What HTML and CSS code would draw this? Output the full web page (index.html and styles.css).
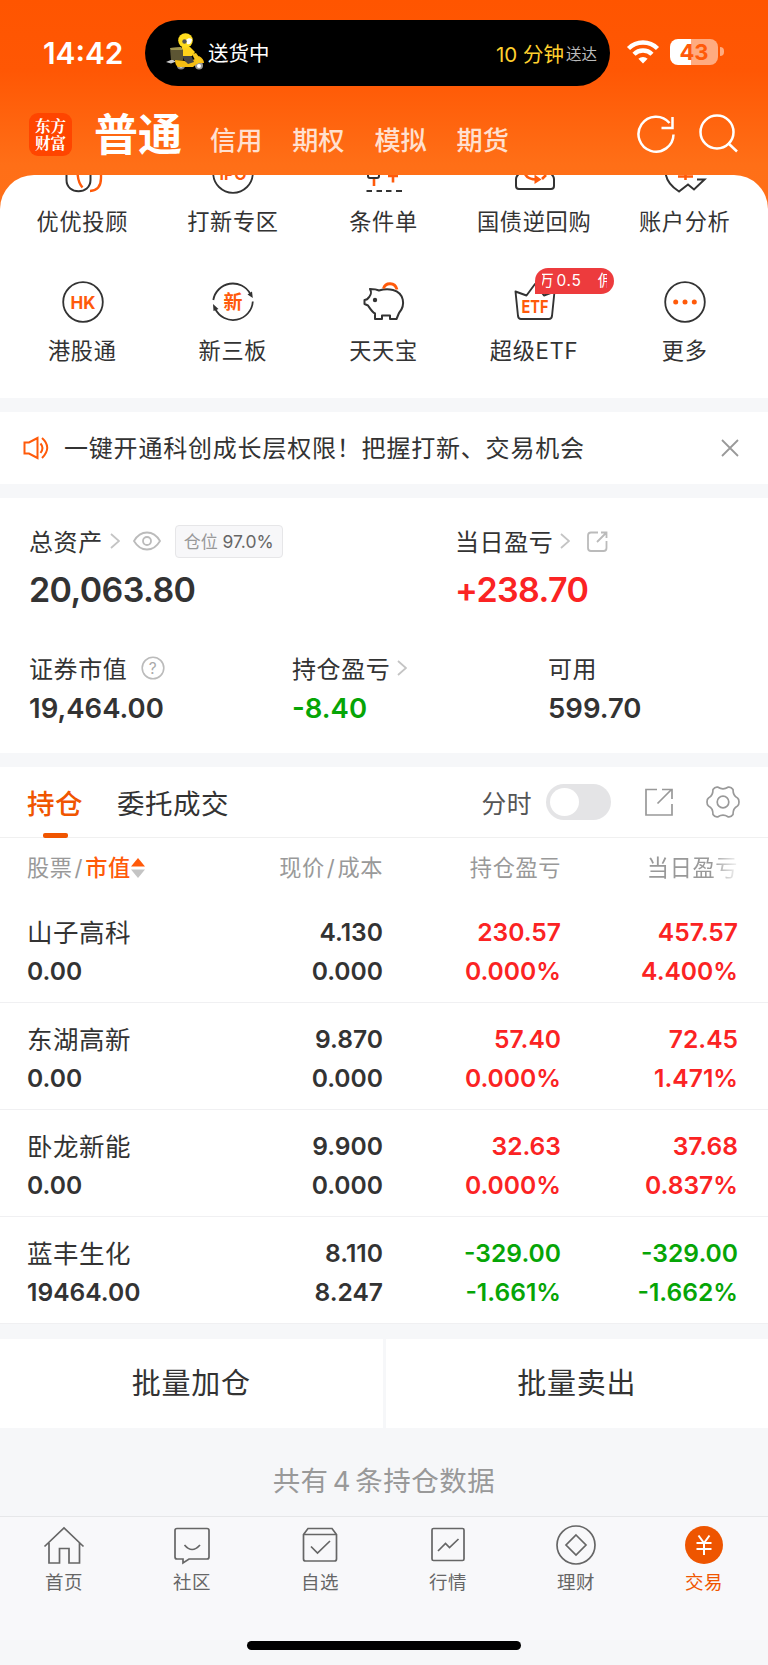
FILE: index.html
```html
<!DOCTYPE html>
<html lang="zh-CN">
<head>
  <meta charset="UTF-8">
  <meta name="viewport" content="width=device-width, initial-scale=1.0">
  <title>东方财富 - 交易</title>
  <link rel="stylesheet" href="styles.css">
</head>
<body>

  <header class="top">
    <div class="status">
      <div class="time">14:42</div>
      <div class="island">
        <svg class="scooter" width="40" height="38" viewBox="0 0 40 38">
          <path d="M1 29l6-2.500 4 2-5 2z" fill="#ccc"/>
          <circle cx="16" cy="32.500" r="4" fill="#888"/><circle cx="16" cy="33" r="1.800" fill="#eee"/>
          <circle cx="34" cy="32.500" r="4" fill="#999"/><circle cx="34" cy="33" r="2" fill="#fff"/>
          <path d="M10 27q8 0 13 2l7-3 4-3q5 3 5 7l-6 0-5 4H13q-3-2-3-7z" fill="#f5be14"/>
          <path d="M17 22h9l3 7-6 2-4-4z" fill="#444"/>
          <path d="M17 14h8l5 5-3 4H17z" fill="#ffd21a"/>
          <path d="M27 21l4-1 6 8-5 3z" fill="#f7c61c"/>
          <path d="M5 15l11-1 2 3v10H6z" fill="#5c5533"/><path d="M5 15l11-1 2 3H6z" fill="#a1964f"/>
          <circle cx="20.500" cy="7.500" r="7.300" fill="#ffdc1f"/>
          <path d="M21 7c2-2 4-2 6-1 0 4-2 6-5 5z" fill="#fff"/><circle cx="19.500" cy="8.500" r="2.200" fill="#555"/>
        </svg>
        <span class="delivering">送货中</span>
        <span class="eta">10 分钟</span><span class="eta-sub">送达</span>
      </div>
      <svg class="wifi" width="34" height="26" viewBox="0 0 34 26">
        <g fill="none" stroke="#fff" stroke-width="4.400">
          <path d="M2.500 9.500a20.500 20.500 0 0 1 29 0"/>
          <path d="M8 15.200a12.700 12.700 0 0 1 18 0"/>
        </g>
        <path d="M17 24.500l-4.600-4.700a6.600 6.600 0 0 1 9.200 0z" fill="#fff"/>
      </svg>
      <div class="battery">43</div>
      <div class="battery-tip"></div>
    </div>
    <div class="nav">
      <div class="logo">东方<br>财富</div>
      <div class="nav-main">普通</div>
      <div class="nav-item">信用</div>
      <div class="nav-item">期权</div>
      <div class="nav-item">模拟</div>
      <div class="nav-item">期货</div>
      <div class="nav-icons">
        <svg width="40" height="40" viewBox="0 0 40 40" fill="none" stroke="#fff" stroke-width="2.500">
          <path d="M37.500 20.500A17.500 17.500 0 1 1 33.500 9"/><path d="M36.500 3v11h-11"/>
        </svg>
        <svg width="40" height="40" viewBox="0 0 40 40" fill="none" stroke="#fff" stroke-width="2.500">
          <circle cx="18" cy="18" r="16.500"/><path d="M29 29l9 8.500"/>
        </svg>
      </div>
    </div>
  </header>

  <section class="sheet">
    <div class="grid">
      <div class="cell">
        <svg width="44" height="44" viewBox="0 0 44 44">
          <path d="M5.500 20v9c0 15 24 15 24 0v-9" fill="none" stroke="#333" stroke-width="2"/>
          <path d="M16.500 20c0 8 1 12 5 16.500M40 20v7c0 8-3 12.500-11 13" fill="none" stroke="#ff5a0a" stroke-width="2.400"/>
        </svg>
        <span>优优投顾</span>
      </div>
      <div class="cell">
        <svg width="44" height="44" viewBox="0 0 44 44">
          <circle cx="22" cy="22" r="19.800" fill="none" stroke="#333" stroke-width="1.800"/>
          <text class="ico-text" x="22" y="28.500" font-size="16">IPO</text>
        </svg>
        <span>打新专区</span>
      </div>
      <div class="cell">
        <svg width="44" height="44" viewBox="0 0 44 44" fill="none" stroke="#333" stroke-width="2">
          <path d="M6 20v5q0 2 2 2h7q2 0 2-2v-5"/><path d="M4.500 40h5.500M14.500 40h5.500M24 40h5.500M34 40h6"/>
          <path d="M12 28v7M31 20v11.500M26 25h10" stroke="#ff5a0a" stroke-width="2.600"/>
        </svg>
        <span>条件单</span>
      </div>
      <div class="cell">
        <svg width="44" height="44" viewBox="0 0 44 44" fill="none" stroke="#333" stroke-width="2">
          <path d="M7 22q-4 3-4 6v7q0 3 3 3h32q3 0 3-3v-7q0-3-4-6"/>
          <path d="M12 23c2 4 7 5.500 12 5.500M29 28l4-4" stroke="#ff5a0a" stroke-width="2.600"/>
          <path d="M21.500 23.500l7 5-7 4.500z" fill="#ff5a0a" stroke="none"/>
        </svg>
        <span>国债逆回购</span>
      </div>
      <div class="cell">
        <svg width="44" height="44" viewBox="0 0 44 44" fill="none" stroke="#333" stroke-width="2">
          <path d="M2.500 20c0 11 8 17 13.500 20.500l9-7 6 5 10.500-10H34"/>
          <path d="M22.500 18v11M15 25.500h15" stroke="#ff5a0a" stroke-width="2.600"/>
        </svg>
        <span>账户分析</span>
      </div>
      <div class="cell">
        <svg width="44" height="44" viewBox="0 0 44 44">
          <circle cx="22" cy="22" r="19.800" fill="none" stroke="#333" stroke-width="1.800"/>
          <text class="ico-text" x="22" y="28.500" font-size="18" textLength="25" lengthAdjust="spacingAndGlyphs">HK</text>
        </svg>
        <span>港股通</span>
      </div>
      <div class="cell">
        <svg width="44" height="44" viewBox="0 0 44 44">
          <path d="M2.300 20a19.800 19.800 0 0 1 37-6M41.800 21.500a19.800 19.800 0 0 1-37.500 7.500" fill="none" stroke="#333" stroke-width="1.800"/>
          <path d="M36.500 14.500l4.500-3 .8 6.500zM7.500 29l-5 2-.5-7z" fill="#333"/>
          <text class="ico-text" x="22" y="28.700" font-size="19">新</text>
        </svg>
        <span>新三板</span>
      </div>
      <div class="cell">
        <svg width="44" height="44" viewBox="0 0 44 44" fill="none" stroke="#333" stroke-width="2" stroke-linejoin="round">
          <path d="M8 9c4 0 6 0 9 1.500 4-1.200 10-1.500 14-.5 11 3 13 15 6 23l-2.500 6h-6.500v-3.500H20v3.500h-7v-5.500c-3-1.500-5-5-7-8L2.500 24v-4c3 0 4-2 5-3.500 1.500-2 2.500-3.500.5-7.500z"/>
          <circle cx="13" cy="20" r="2.200" fill="#333" stroke="none"/>
          <path d="M21.500 8.500c2-6.500 11.500-6.500 13.500 1" stroke="#ff5a0a" stroke-width="2.800"/>
        </svg>
        <span>天天宝</span>
      </div>
      <div class="cell">
        <svg width="44" height="44" viewBox="0 0 44 44">
          <path d="M2.500 11.500l11 4L22 4l9 11.500 10.500-4-2.500 24.500q-.5 3-3 3H8q-2.500 0-3-3z" fill="none" stroke="#333" stroke-width="1.900" stroke-linejoin="round"/>
          <text class="ico-text" x="22" y="32.500" font-size="18" textLength="27" lengthAdjust="spacingAndGlyphs">ETF</text>
        </svg>
        <span>超级ETF</span>
        <div class="badge"><p><b>万</b>0.5<i>佣</i></p></div>
      </div>
      <div class="cell">
        <svg width="44" height="44" viewBox="0 0 44 44">
          <circle cx="22" cy="22" r="19.800" fill="none" stroke="#333" stroke-width="1.800"/>
          <g fill="#ff5a0a"><circle cx="12.700" cy="22" r="2.500"/><circle cx="22" cy="22" r="2.500"/><circle cx="31.300" cy="22" r="2.500"/></g>
        </svg>
        <span>更多</span>
      </div>
    </div>
  </section>

  <section class="notice">
    <svg width="26" height="24" viewBox="0 0 26 24" fill="none" stroke="#ff5a0a" stroke-width="2">
      <path d="M1.500 6.500h4.500L14.500 2v20L6 17.500H1.500z"/><path d="M17.500 7.500q4 4.500 0 9.500M19 2q10.500 9.500 0 20"/>
    </svg>
    <p>一键开通科创成长层权限！把握打新、交易机会</p>
    <svg width="18" height="18" viewBox="0 0 18 18" stroke="#999" stroke-width="1.800"><path d="M1 1l16 16M17 1L1 17"/></svg>
  </section>

  <section class="assets">
    <div class="row row-big">
      <div>
        <div class="label">
          总资产
          <svg class="arrow" width="10" height="16" viewBox="0 0 10 16"><path d="M1 1l8 7-8 7"/></svg>
          <svg class="eye" width="28" height="20" viewBox="0 0 28 20" fill="none" stroke="#bbb" stroke-width="1.800"><path d="M1 10q5-8.500 13-8.500T27 10q-5 8.500-13 8.500T1 10z"/><circle cx="14" cy="10" r="4"/></svg>
          <span class="ratio">仓位 <em>97.0%</em></span>
        </div>
        <div class="big">20,063.80</div>
      </div>
      <div>
        <div class="label">
          当日盈亏
          <svg class="arrow" width="10" height="16" viewBox="0 0 10 16"><path d="M1 1l8 7-8 7"/></svg>
          <svg class="share" width="21" height="21" viewBox="0 0 21 21" fill="none" stroke="#bbb" stroke-width="1.800"><path d="M11 1.500H4q-3 0-3 3V17q0 3 3 3h12.500q3 0 3-3v-7M10 11l9-9M14 1.500h5.500V7"/></svg>
        </div>
        <div class="big up">+238.70</div>
      </div>
    </div>
    <div class="row row-small">
      <div>
        <div class="label">
          证券市值
          <svg class="help" width="24" height="24" viewBox="0 0 24 24"><circle cx="12" cy="12" r="10.800" fill="none" stroke="#bbb" stroke-width="1.600"/><text x="12" y="17.500" font-size="15.500" text-anchor="middle">?</text></svg>
        </div>
        <div class="mid">19,464.00</div>
      </div>
      <div>
        <div class="label">
          持仓盈亏
          <svg class="arrow" width="10" height="16" viewBox="0 0 10 16"><path d="M1 1l8 7-8 7"/></svg>
        </div>
        <div class="mid down">-8.40</div>
      </div>
      <div>
        <div class="label">可用</div>
        <div class="mid">599.70</div>
      </div>
    </div>
  </section>

  <section class="tabs">
    <div class="tab active">持仓</div>
    <div class="tab">委托成交</div>
    <div class="minute">分时</div>
    <div class="switch"></div>
    <svg class="tab-share" width="28" height="28" viewBox="0 0 28 28" fill="none" stroke="#999" stroke-width="1.700"><path d="M12 1.500H1V27h26V16M12.500 15.500l14-14M17 1.500h10V11"/></svg>
    <svg class="gear" width="34" height="34" viewBox="0 0 34 34" fill="none" stroke="#999" stroke-width="1.700" stroke-linejoin="round">
      <path d="M12 2.200q5 3.300 10 0 3-.7 5 2.300 0 6.500 4.500 8.500 1.500 1 1.500 4t-1.500 4q-4.500 2-4.500 8.500-2 3-5 2.300-5-3.300-10 0-3 .7-5-2.300 0-6.500-4.500-8.500Q1 20 1 17t1.500-4Q7 11 7 4.500q2-3 5-2.300z"/>
      <circle cx="17" cy="17" r="5.800"/>
    </svg>
  </section>

  <section class="table">
    <div class="tr th">
      <div>股票<s>/</s><span class="sort">市值</span><svg width="14" height="20" viewBox="0 0 14 20"><path d="M7 0l7 8.500H0z" fill="#ff5a0a"/><path d="M0 11.500h14L7 20z" fill="#c4c4c4"/></svg></div>
      <div>现价<s>/</s>成本</div>
      <div>持仓盈亏</div>
      <div class="fade">当日盈亏</div>
    </div>
    <div class="tr">
      <div><b>山子高科</b>0.00</div>
      <div>4.130<br>0.000</div>
      <div class="up">230.57<br>0.000%</div>
      <div class="up">457.57<br>4.400%</div>
    </div>
    <div class="tr">
      <div><b>东湖高新</b>0.00</div>
      <div>9.870<br>0.000</div>
      <div class="up">57.40<br>0.000%</div>
      <div class="up">72.45<br>1.471%</div>
    </div>
    <div class="tr">
      <div><b>卧龙新能</b>0.00</div>
      <div>9.900<br>0.000</div>
      <div class="up">32.63<br>0.000%</div>
      <div class="up">37.68<br>0.837%</div>
    </div>
    <div class="tr">
      <div><b>蓝丰生化</b>19464.00</div>
      <div>8.110<br>8.247</div>
      <div class="down">-329.00<br>-1.661%</div>
      <div class="down">-329.00<br>-1.662%</div>
    </div>
  </section>

  <section class="batch">
    <div>批量加仓</div>
    <div>批量卖出</div>
  </section>

  <p class="total">共有 4 条持仓数据</p>

  <nav class="bottom">
    <div class="item">
      <svg width="42" height="42" viewBox="0 0 42 42"><path d="M1.500 22.500L21 4l19.500 18.500M6 19v20h10.500V24.500h9.500V39h10.500V19"/></svg>
      首页
    </div>
    <div class="item">
      <svg width="42" height="42" viewBox="0 0 42 42"><path d="M6 4.500h30q2 0 2 2V33q0 2-2 2H18l-6 4v-4H6q-2 0-2-2V6.500q0-2 2-2zM13.500 21q7.500 9 15.500 0"/></svg>
      社区
    </div>
    <div class="item">
      <svg width="42" height="42" viewBox="0 0 42 42"><path d="M9 4.500h24l4.500 6V35q0 2-2 2h-29q-2 0-2-2V10.500zM4.500 10.500h33M12 22.500l6.500 6.500L31 17"/></svg>
      自选
    </div>
    <div class="item">
      <svg width="42" height="42" viewBox="0 0 42 42"><rect x="5" y="4.500" width="32" height="32" rx="1.500"/><path d="M11 27l7.500-7.500 4 4L31.500 15"/></svg>
      行情
    </div>
    <div class="item">
      <svg width="42" height="42" viewBox="0 0 42 42"><circle cx="21" cy="21" r="19"/><path d="M21 11l10 10-10 10-10-10z"/></svg>
      理财
    </div>
    <div class="item on">
      <svg width="42" height="42" viewBox="0 0 42 42"><circle class="disc" cx="21" cy="21" r="19"/><path class="yen" d="M15.500 11.500l5.500 7.500 5.500-7.500M21 19v12M13.500 19h15M13.500 25h15"/></svg>
      交易
    </div>
  </nav>
  <div class="home-bar"></div>

</body>
</html>
```
FILE: styles.css
```css
* {
  box-sizing: border-box;
}
body {
  margin: 0;
  width: 768px;
  height: 1665px;
  overflow: hidden;
  display: flex;
  flex-direction: column;
  background: #f6f7f9;
  color: #333;
  font-family: Inter, "Noto Sans CJK SC", sans-serif;
}
p {
  margin: 0;
}
svg {
  flex: none;
  display: block;
}
.up {
  color: #fb2323;
}
.down {
  color: #06a506;
}

/* header */
.top {
  height: 220px;
  flex: none;
  color: #fff;
  background: linear-gradient(#ff5500 0, #ff5704 70px, #ff6f17 165px, #ff7019 220px);
}
.status {
  display: flex;
  align-items: center;
  height: 86px;
  padding: 20px 0 0 43px;
}
.time {
  width: 102px;
  font-size: 29.8px;
  font-weight: 600;
}
.island {
  display: flex;
  align-items: center;
  width: 465px;
  height: 66px;
  padding: 0 13px 0 20px;
  border-radius: 33px;
  background: #000;
}
.scooter {
  margin-top: -3px;
}
.delivering {
  margin: -2px 0 0 3px;
  font-size: 20.5px;
}
.eta {
  margin: -1px 0 0 auto;
  font-size: 20.5px;
  color: #ffd02e;
}
.eta-sub {
  margin-left: 2px;
  font-size: 15.5px;
  color: #bbb;
}
.wifi {
  margin: -2px 0 0 16px;
}
.battery {
  width: 48px;
  height: 26px;
  margin: -3px 0 0 10px;
  border-radius: 8px;
  background: linear-gradient(90deg, #fff 21px, #ffab80 21px);
  color: #ff5a0a;
  font-size: 22px;
  font-weight: 700;
  line-height: 26px;
  text-align: center;
}
.battery-tip {
  width: 4px;
  height: 9px;
  margin: -3px 0 0 2px;
  border-radius: 0 5px 5px 0;
  background: #ffab80;
}
.nav {
  display: flex;
  align-items: center;
  height: 96px;
  padding: 0 29px;
}
.logo {
  width: 43px;
  height: 43px;
  padding-top: 4px;
  border-radius: 9px;
  background: #ff4500;
  font-family: "Noto Serif CJK SC", "Noto Sans CJK SC", sans-serif;
  font-size: 15.5px;
  font-weight: 700;
  line-height: 17.5px;
  text-align: center;
}
.nav-main {
  margin: -5px 14px 0 22px;
  font-size: 44px;
  font-weight: 700;
}
.nav-item {
  width: 82.2px;
  margin-top: 9px;
  padding-left: 14px;
  font-size: 26.2px;
  font-weight: 500;
  color: #ffe0d0;
  white-space: nowrap;
}
.nav-icons {
  display: flex;
  gap: 23px;
  margin-left: auto;
}

/* shortcuts */
.sheet {
  height: 223px;
  margin-top: -45px;
  flex: none;
  overflow: hidden;
  border-radius: 34px 34px 0 0;
  background: #fff;
}
.grid {
  display: grid;
  grid-template-columns: repeat(5, 150.6px);
  grid-auto-rows: 129px;
  justify-content: center;
  margin-top: -24.5px;
}
.cell {
  position: relative;
  display: flex;
  flex-direction: column;
  align-items: center;
  font-size: 22.2px;
  letter-spacing: 0.7px;
  line-height: 30px;
}
.cell span {
  margin: 12px 1px 0 0;
}
.ico-text {
  fill: #ff5a0a;
  font-weight: 700;
  letter-spacing: 0;
  text-anchor: middle;
}
.badge {
  position: absolute;
  left: 76px;
  top: -12px;
  width: 79px;
  height: 26px;
  padding: 0 7px;
  border-radius: 13px 13px 13px 0;
  background: #ed3b3d;
  color: #fff;
  font-size: 15.5px;
  line-height: 26px;
}
.badge p {
  display: flex;
  overflow: hidden;
  white-space: nowrap;
}
.badge b {
  margin: 0 2px 0 -4px;
  font-weight: 400;
}
.badge i {
  margin-left: 16px;
  font-style: normal;
}

/* notice */
.notice {
  display: flex;
  align-items: center;
  height: 72px;
  flex: none;
  margin-top: 14px;
  padding: 0 29px 0 23px;
  background: #fff;
}
.notice p {
  margin: -3px auto 0 15px;
  font-size: 24px;
  letter-spacing: 0.8px;
}

/* assets */
.assets {
  height: 255px;
  flex: none;
  margin-top: 14px;
  padding: 24px 29px 0;
  background: #fff;
}
.row {
  display: grid;
}
.row-big {
  grid-template-columns: 426px 1fr;
}
.row-small {
  grid-template-columns: 263px 256px 1fr;
  margin-top: 29px;
}
.label {
  display: flex;
  align-items: center;
  height: 36px;
  font-size: 24px;
  letter-spacing: 0.6px;
}
.label svg {
  margin-top: 2px;
}
.label .arrow {
  margin-left: 7px;
  fill: none;
  stroke: #c4c4c4;
  stroke-width: 1.8;
}
.label .eye {
  margin-left: 13px;
}
.label .share {
  margin-left: 17px;
}
.label .help {
  margin-left: 14px;
}
.help text {
  fill: #aaa;
}
.ratio {
  height: 33px;
  margin: 2px 0 0 14px;
  padding: 0 8px;
  border: 1px solid #e6e6e8;
  border-radius: 4px;
  background: #f7f7f9;
  color: #999;
  font-size: 17px;
  line-height: 31px;
  letter-spacing: 0;
  white-space: nowrap;
}
.ratio em {
  color: #666;
  font-style: normal;
  font-size: 17.5px;
}
.big {
  height: 62px;
  font-size: 34px;
  font-weight: 600;
  letter-spacing: -0.6px;
  line-height: 64px;
}
.mid {
  font-size: 27.5px;
  font-weight: 600;
  line-height: 46px;
}

/* tabs */
.tabs {
  display: flex;
  align-items: center;
  height: 71px;
  flex: none;
  margin-top: 14px;
  padding: 0 28px 0 27px;
  border-bottom: 1px solid #f0f0f0;
  background: #fff;
}
.tab {
  position: relative;
  margin-right: 34px;
  font-size: 27.5px;
  letter-spacing: 0.5px;
}
.tab.active {
  color: #f05500;
  font-weight: 500;
}
.tab.active::after {
  content: "";
  position: absolute;
  left: 16px;
  bottom: -16px;
  width: 25px;
  height: 5px;
  border-radius: 2px;
  background: #f05500;
}
.minute {
  margin-left: auto;
  font-size: 24.8px;
  letter-spacing: 0.5px;
  color: #555;
}
.switch {
  width: 65px;
  height: 36px;
  margin-left: 14px;
  padding: 4px;
  border-radius: 18px;
  background: #e4e4e6;
}
.switch::before {
  content: "";
  display: block;
  width: 29px;
  height: 28px;
  border-radius: 50%;
  background: #fff;
}
.tab-share {
  margin-left: 34px;
}
.gear {
  margin-left: 33px;
}

/* positions */
.table {
  flex: none;
  background: #fff;
}
.tr {
  display: grid;
  grid-template-columns: 180px 176px 178px 177px;
  height: 107px;
  padding: 17px 0 0 27px;
  border-bottom: 1px solid #f0f0f2;
  font-size: 24.6px;
  font-weight: 600;
  line-height: 39px;
  text-align: right;
}
.tr > div:first-child {
  text-align: left;
}
.tr b {
  display: block;
  font-size: 25.5px;
  font-weight: 400;
  letter-spacing: 0.5px;
}
.tr.th {
  height: 58px;
  padding-top: 10px;
  border: 0;
  color: #999;
  font-size: 22.2px;
  font-weight: 400;
  letter-spacing: 0.6px;
}
.tr.th > div:first-child {
  display: flex;
  align-items: center;
  height: 39px;
}
.th s {
  padding: 0 2px;
  text-decoration: none;
}
.sort {
  color: #ff5a0a;
  font-weight: 500;
}
.fade {
  -webkit-mask-image: linear-gradient(90deg, #000 150px, transparent 180px);
  mask-image: linear-gradient(90deg, #000 150px, transparent 180px);
}

/* batch buttons */
.batch {
  display: grid;
  grid-template-columns: 1fr 1fr;
  gap: 3px;
  height: 89px;
  flex: none;
  margin-top: 15px;
  font-size: 29px;
  letter-spacing: 0.7px;
  line-height: 89px;
  text-align: center;
}
.batch div {
  background: #fff;
}
.total {
  height: 88px;
  flex: none;
  color: #999;
  font-size: 27.5px;
  letter-spacing: 0.5px;
  word-spacing: -4px;
  line-height: 107px;
  text-align: center;
}

/* bottom bar */
.bottom {
  display: grid;
  grid-template-columns: repeat(6, 1fr);
  height: 124px;
  flex: none;
  border-top: 1px solid #e6e7e9;
  background: #f8f8fa;
}
.item {
  display: flex;
  flex-direction: column;
  align-items: center;
  padding-top: 7px;
  color: #666;
  font-size: 18.5px;
  letter-spacing: 0.5px;
  line-height: 32px;
}
.item svg {
  fill: none;
  stroke: #666;
  stroke-width: 1.7;
}
.item.on {
  color: #f05500;
}
.item .disc {
  fill: #ee5500;
  stroke: none;
}
.item .yen {
  stroke: #fff;
  stroke-width: 2;
}
.home-bar {
  width: 274px;
  height: 9px;
  flex: none;
  margin: 1px auto 0;
  border-radius: 5px;
  background: #000;
}
```
